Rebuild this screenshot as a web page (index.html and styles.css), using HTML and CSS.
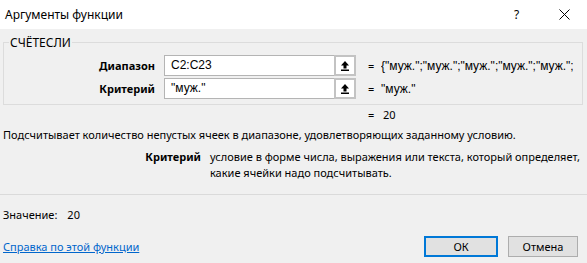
FILE: index.html
```html
<!DOCTYPE html>
<html lang="ru">
<head>
<meta charset="utf-8">
<title>Аргументы функции</title>
<link rel="stylesheet" href="styles.css">
</head>
<body>
<div class="dialog">
  <div class="titlebar">
    <span class="title">Аргументы функции</span>
    <span class="tb-help">?</span>
    <span class="tb-close"><svg width="11" height="11" viewBox="0 0 11 11"><path d="M0.5 0.5 L10.5 10.5 M10.5 0.5 L0.5 10.5" stroke="#000" stroke-width="1" fill="none"/></svg></span>
  </div>
  <div class="body">
    <fieldset class="group">
      <legend>СЧЁТЕСЛИ</legend>
      <div class="args">
        <div class="arg-label">Диапазон</div>
        <div class="arg-input">C2:C23</div>
        <div class="arg-btn"><svg width="8" height="10" viewBox="0 0 8 10"><path d="M4 0 L0 4.5 L8 4.5 Z" fill="#000"/><rect x="2.5" y="4" width="3" height="3.5" fill="#000"/><rect x="0" y="8.5" width="8" height="1.5" fill="#000"/></svg></div>
        <div class="arg-eq">=</div>
        <div class="arg-val">{"муж.";"муж.";"муж.";"муж.";"муж.";"муж.";"муж.";"муж."}</div>

        <div class="arg-label">Критерий</div>
        <div class="arg-input">"муж."</div>
        <div class="arg-btn"><svg width="8" height="10" viewBox="0 0 8 10"><path d="M4 0 L0 4.5 L8 4.5 Z" fill="#000"/><rect x="2.5" y="4" width="3" height="3.5" fill="#000"/><rect x="0" y="8.5" width="8" height="1.5" fill="#000"/></svg></div>
        <div class="arg-eq">=</div>
        <div class="arg-val">"муж."</div>
      </div>
    </fieldset>
    <div class="result"><span class="res-eq">=</span><span class="res-val">20</span></div>
    <p class="desc">Подсчитывает количество непустых ячеек в диапазоне, удовлетворяющих заданному условию.</p>
    <div class="argdesc">
      <div class="argdesc-name">Критерий</div>
      <div class="argdesc-text">условие в форме числа, выражения или текста, который определяет,<br>какие ячейки надо подсчитывать.</div>
    </div>
  </div>
  <div class="footer">
    <div class="value-line">Значение:<span class="value-num">20</span></div>
    <div class="bottom">
      <a class="help-link" href="#">Справка по этой функции</a>
      <div class="buttons">
        <button class="btn btn-ok">ОК</button>
        <button class="btn btn-cancel">Отмена</button>
      </div>
    </div>
  </div>
</div>
</body>
</html>
```
FILE: styles.css
```css
html, body {
  margin: 0;
  padding: 0;
}
body {
  width: 587px;
  height: 263px;
  background: #f0f0f0;
  font-family: "Noto Sans", "Open Sans", sans-serif;
  font-size: 11px;
  color: #000;
  overflow: hidden;
}
.dialog {
  width: 587px;
  height: 263px;
  display: flex;
  flex-direction: column;
}
.titlebar {
  height: 29px;
  background: #fff;
  display: flex;
  align-items: center;
  padding-left: 5px;
  box-sizing: border-box;
}
.title {
  flex: 1;
  font-size: 12px;
  padding-bottom: 1px;
}
.tb-help {
  width: 12px;
  margin-right: 33px;
  font-size: 12px;
}
.tb-close {
  width: 11px;
  height: 11px;
  margin-right: 17px;
  display: flex;
}
.body {
  padding: 6px 0 0 3px;
}
.group {
  margin: 0;
  padding: 0 0 5px 0;
  width: 580px;
  box-sizing: border-box;
  border: 1px solid #dcdcdc;
  min-width: 0;
}
.group legend {
  padding: 0 1px;
  margin-left: 5px;
  line-height: 15px;
  font-size: 12px;
}
.args {
  display: grid;
  grid-template-columns: 160px 170px 22px 25px 1fr;
  grid-auto-rows: 21px;
  row-gap: 2px;
  align-items: center;
  margin-top: 5px;
}
.arg-label {
  font-weight: bold;
  text-align: right;
  margin-right: 9px;
}
.arg-input {
  height: 21px;
  box-sizing: border-box;
  border: 1px solid #b4b4b4;
  border-right: none;
  background: #fff;
  font-family: "Liberation Sans", Arial, sans-serif;
  font-size: 12px;
  line-height: 19px;
  padding-left: 6px;
}
.arg-btn {
  height: 21px;
  box-sizing: border-box;
  border: 2px solid #c3c3c3;
  background: #fff;
  display: flex;
  align-items: center;
  justify-content: center;
}
.arg-eq {
  padding-left: 12px;
}
.arg-val {
  font-family: "Liberation Sans", Arial, sans-serif;
  font-size: 12px;
  white-space: nowrap;
  overflow: hidden;
  margin-right: 9px;
}
.result {
  margin-top: 2px;
  height: 16px;
  line-height: 16px;
  padding-left: 365px;
}
.res-eq {
  display: inline-block;
  width: 15px;
}
.desc {
  margin: 4px 0 0 0;
  line-height: 16px;
}
.argdesc {
  display: flex;
  margin-top: 6px;
  line-height: 16px;
}
.argdesc-name {
  font-weight: bold;
  width: 198px;
  text-align: right;
  flex: none;
}
.argdesc-text {
  padding-left: 9px;
}
.footer {
  margin-top: auto;
  border-top: 1px solid #dadada;
  padding: 12px 9px 6px 3px;
}
.value-line {
  line-height: 16px;
}
.value-num {
  margin-left: 10px;
}
.bottom {
  display: flex;
  align-items: center;
  justify-content: space-between;
  margin-top: 13px;
}
.help-link {
  color: #0066cc;
  text-decoration: underline;
}
.buttons {
  display: flex;
  gap: 10px;
}
.btn {
  width: 74px;
  height: 21px;
  box-sizing: border-box;
  border: 1px solid #adadad;
  background: #e1e1e1;
  font-family: "Noto Sans", "Open Sans", sans-serif;
  font-size: 11px;
  padding: 0;
  color: #000;
}
.btn-ok {
  border: 2px solid #0078d7;
}
.btn-cancel {
  width: 70px;
}
```
